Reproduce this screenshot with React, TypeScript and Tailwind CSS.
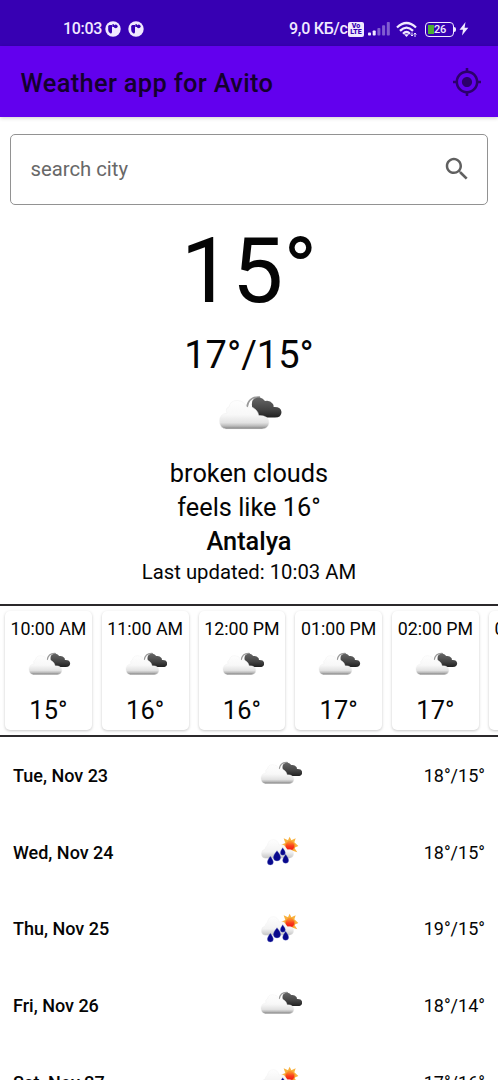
import React from "react";

function BrokenClouds({ id, className }: { id: string; className: string }) {
  return (
    <svg viewBox="0 0 64 36" className={className}>
      <defs>
        <linearGradient id={`${id}-light`} x1="0" y1="0" x2="0" y2="1">
          <stop offset="0" stopColor="#fefefe" />
          <stop offset="0.5" stopColor="#f8f8f8" />
          <stop offset="0.78" stopColor="#e2e2e2" />
          <stop offset="0.9" stopColor="#b8b8b8" />
          <stop offset="1" stopColor="#7c7c7c" />
        </linearGradient>
        <linearGradient id={`${id}-dark`} x1="0" y1="0" x2="0" y2="1">
          <stop offset="0" stopColor="#666" />
          <stop offset="0.6" stopColor="#444" />
          <stop offset="1" stopColor="#202020" />
        </linearGradient>
      </defs>
      <path d="M29 12C30 5 35 1.500 42 2.200" fill="none" stroke="#9a9a9a" strokeWidth="1.800" />
      <path
        d="M34 8C34 4 38 2 42 2.500Q45 3 47 6Q52 5 54.500 8.500Q56 10 55.500 12Q63 11.500 63.500 17Q63.500 22.500 57 22.500H45Q40 22 39 18Q33 14 34 8Z"
        fill={`url(#${id}-dark)`}
      />
      <path
        d="M8 34Q1.500 33 1.500 26Q1.500 19 9 18Q7 13 11 12Q12 5.500 19 5.500Q26 5.500 29 12.500Q34 10.500 38 15Q41 18 40.500 20.500Q51 20 51 28Q50.500 33.500 44 34Z"
        fill={`url(#${id}-light)`}
        stroke="#eeeeee"
        strokeWidth="0.5"
      />
    </svg>
  );
}

function SunRain({ id, className }: { id: string; className: string }) {
  return (
    <svg viewBox="60 258 126 90" className={className}>
      <defs>
        <linearGradient id={`${id}-cloud`} x1="0" y1="0" x2="0" y2="1">
          <stop offset="0" stopColor="#fefefe" />
          <stop offset="0.65" stopColor="#f3f3f3" />
          <stop offset="1" stopColor="#c4c4c4" />
        </linearGradient>
        <linearGradient id={`${id}-sun`} x1="0" y1="0" x2="0" y2="1">
          <stop offset="0" stopColor="#ff9a2c" />
          <stop offset="0.5" stopColor="#fa3c1c" />
          <stop offset="1" stopColor="#f01010" />
        </linearGradient>
      </defs>
      <path
        d="M149 260L154 271L167 265L163 277L175 288L163 293L172 307L158 302L149 310L140 302L126 304L135 292L124 284L136 279L131 265L144 271Z"
        fill="#f9b13c"
      />
      <circle cx="150" cy="288" r="14" fill={`url(#${id}-sun)`} stroke="#f58a2c" strokeWidth="2" />
      <path
        d="M76 325Q64 323 64 311Q65 299 76 297Q75 289 82 287Q85 268 100 269Q113 270 118 285Q131 280 138 293Q140 297 143 299Q161 297 161 312Q160 323 148 325Z"
        fill={`url(#${id}-cloud)`}
        stroke="#ececec"
      />
      <path
        d="M111 302Q122 315 122 322A11 11 0 0 1 100 322Q100 315 111 302ZM91 319Q100 331 100 336A9 9 0 0 1 82 336Q82 331 91 319ZM137 313Q146 325 146 331A9 9 0 0 1 128 331Q128 325 137 313ZM128 293Q136 303 136 308A7.500 7.500 0 0 1 121 308Q121 303 128 293Z"
        fill="#08088c"
        stroke="#6c78c8"
        strokeWidth="1"
      />
    </svg>
  );
}

function NotificationIcon() {
  return (
    <svg viewBox="0 0 16 16" className="size-4">
      <circle cx="8" cy="8" r="7.700" fill="#f0e9ff" />
      <path d="M4.500 4H7V11Q7 12.500 5.500 12.500Q3.500 12 3.200 9V5.500Q3.300 4 4.500 4Z" fill="#3700b3" />
      <circle cx="10.700" cy="5.300" r="1.900" fill="#3700b3" />
      <path d="M7.300 3.300H9V6H7.300Z" fill="#3700b3" />
    </svg>
  );
}

function StatusBar() {
  return (
    <header className="flex h-[46px] items-center bg-[#3700b3] pl-[63px] pt-3 text-[#f0e9ff]">
      <span className="w-[42px] whitespace-nowrap text-[16px] font-medium tracking-[-0.3px]">10:03</span>
      <div className="flex gap-[7px]">
        <NotificationIcon />
        <NotificationIcon />
      </div>
      <span className="ml-[145px] w-[59px] whitespace-nowrap text-[16px] font-medium tracking-[-0.25px]">9,0 КБ/с</span>
      <span className="flex h-[15px] w-4 flex-col items-center justify-center rounded-[2px] bg-[#f0e9ff] text-[7px] font-black leading-[6px] text-[#3700b3]">
        <span>Vo</span>
        <span>LTE</span>
      </span>
      <svg viewBox="0 0 22 16" className="ml-1 h-4 w-[22px]" fill="#f0e9ff">
        <rect x="0" y="11.500" width="3" height="3" rx="0.800" />
        <rect x="4.700" y="9.500" width="3" height="5" rx="0.800" />
        <g opacity="0.4">
          <rect x="9.400" y="7" width="3" height="7.500" rx="0.800" />
          <rect x="14.100" y="4.200" width="3" height="10.300" rx="0.800" />
          <rect x="18.800" y="1" width="3" height="13.500" rx="0.800" />
        </g>
      </svg>
      <svg viewBox="0 0 22 17" className="ml-[6px] h-[17px] w-[22px]" fill="none" stroke="#f0e9ff" strokeWidth="2.300">
        <path d="M1 6.500Q10.500-2.500 20 6.500M4 9.800Q10.500 3.500 17 9.800M7 12.800Q10.500 9.300 14 12.800" />
        <path d="M8 13.300L10.500 16L13 13.300Z" fill="#f0e9ff" stroke="none" />
        <path d="M16 11.500V15M19 12V16M14.700 13.500L16 15L17 14M17.800 13.500L19 12L20.300 13.500" strokeWidth="1" />
      </svg>
      <div className="ml-[7px] flex h-[15px] w-[29px] items-center rounded-[4px] border-[1.500px] border-[#f0e9ff] p-[2px]">
        <span className="h-[9px] w-[6px] shrink-0 bg-[#4caf32]" />
        <span className="w-3 text-[11px] font-medium leading-none tracking-[-0.3px]">26</span>
      </div>
      <span className="h-[5px] w-[2px] rounded-r-sm bg-[#f0e9ff]" />
      <svg viewBox="0 0 10 14" className="ml-[3px] h-[14px] w-[10px]" fill="#f0e9ff">
        <path d="M6.500 0L0.500 7.800H4L3 13.500L9.300 5.700H5.600Z" />
      </svg>
    </header>
  );
}

function AppBar() {
  return (
    <div className="flex h-[71px] items-center justify-between bg-[#6200ee] pl-[20.500px] pr-[17px] shadow-[0_1px_4px_rgba(0,0,0,0.2)]">
      <h1 className="whitespace-nowrap pt-[2px] text-[25.400px] font-medium leading-8 tracking-[0.33px] text-[#14002e]">
        Weather app for Avito
      </h1>
      <svg viewBox="1 1 22 22" className="size-7" fill="#2c006b">
        <path d="M12 8c-2.210 0-4 1.790-4 4s1.790 4 4 4 4-1.790 4-4-1.790-4-4-4zm8.940 3c-.46-4.170-3.770-7.480-7.940-7.940V1h-2v2.060C6.830 3.520 3.520 6.830 3.060 11H1v2h2.060c.46 4.170 3.770 7.480 7.940 7.940V23h2v-2.060c4.170-.46 7.480-3.770 7.940-7.940H23v-2h-2.060zM12 19c-3.870 0-7-3.130-7-7s3.130-7 7-7 7 3.130 7 7-3.130 7-7 7z" />
      </svg>
    </div>
  );
}

function SearchField() {
  return (
    <div className="mx-[10px] mt-[17px] flex h-[71px] items-center justify-between rounded-[5px] border-[1.300px] border-[#929292] pl-[19.500px] pr-[15px] text-[#686868]">
      <span className="text-[20.300px]">search city</span>
      <svg viewBox="0 0 24 24" className="mb-px size-[30px]" fill="#606060">
        <path d="M15.500 14h-.79l-.28-.27C15.410 12.590 16 11.110 16 9.500 16 5.910 13.090 3 9.500 3S3 5.910 3 9.500 5.910 16 9.500 16c1.610 0 3.090-.59 4.230-1.570l.27.28v.79l5 4.990L20.490 19l-4.990-5zm-6 0C7.010 14 5 11.990 5 9.500S7.010 5 9.500 5 14 7.010 14 9.500 11.990 14 9.500 14z" />
      </svg>
    </div>
  );
}

function CurrentWeather() {
  return (
    <section className="flex flex-col items-center text-[#050505]">
      <p className="mt-[18px] text-[91.200px] leading-[96px]">15°</p>
      <p className="mt-2 text-[38px] leading-[56px]">17°/15°</p>
      <BrokenClouds id="now" className="ml-[2px] mt-[12px] h-9 w-16" />
      <p className="mt-[26px] text-[25.300px] leading-[34px]">broken clouds</p>
      <p className="text-[25.300px] leading-[34px]">feels like 16°</p>
      <p className="text-[25.300px] font-medium leading-[34px]">Antalya</p>
      <p className="text-[20.300px] leading-[27px]">Last updated: 10:03 AM</p>
    </section>
  );
}

const hours = [
  ["10:00 AM", "15°"],
  ["11:00 AM", "16°"],
  ["12:00 PM", "16°"],
  ["01:00 PM", "17°"],
  ["02:00 PM", "17°"],
  ["03:00 PM", "17°"],
];

function HourlyForecast() {
  return (
    <section className="mt-[18px] flex h-[133px] gap-[10px] overflow-hidden border-y-2 border-[#2b292b] pl-[5px] pt-[5px]">
      {hours.map(([time, temp], i) => (
        <div
          key={time}
          className="flex h-[119px] w-[86.750px] shrink-0 flex-col items-center rounded-[5px] bg-white text-[#050505] shadow-[0_1px_3px_rgba(0,0,0,0.22)]"
        >
          <span className="mt-[6px] whitespace-nowrap text-[17.800px] leading-6">{time}</span>
          <BrokenClouds id={`hour-${i}`} className="ml-[2px] mt-[11px] h-6 w-[42.500px]" />
          <span className="mt-[18px] text-[25.400px] leading-8">{temp}</span>
        </div>
      ))}
    </section>
  );
}

const days = [
  { date: "Tue, Nov 23", range: "18°/15°", rain: false },
  { date: "Wed, Nov 24", range: "18°/15°", rain: true },
  { date: "Thu, Nov 25", range: "19°/15°", rain: true },
  { date: "Fri, Nov 26", range: "18°/14°", rain: false },
  { date: "Sat, Nov 27", range: "17°/16°", rain: true },
];

function DailyForecast() {
  return (
    <section className="text-[#050505]">
      {days.map(({ date, range, rain }, i) => (
        <div key={date} className="flex h-[76.700px] items-center pl-[13px] pr-[13px] text-[18px]">
          <span className="w-[246.500px] font-medium">{date}</span>
          {rain ? (
            <SunRain id={`day-${i}`} className="mb-0.5 h-[30px] w-[42px]" />
          ) : (
            <BrokenClouds id={`day-${i}`} className="mb-[5px] h-6 w-[42.500px]" />
          )}
          <span className="ml-auto">{range}</span>
        </div>
      ))}
    </section>
  );
}

export default function App() {
  return (
    <main className="h-[1080px] w-[498px] overflow-hidden bg-white font-['Roboto',sans-serif]">
      <StatusBar />
      <AppBar />
      <SearchField />
      <CurrentWeather />
      <HourlyForecast />
      <DailyForecast />
    </main>
  );
}
